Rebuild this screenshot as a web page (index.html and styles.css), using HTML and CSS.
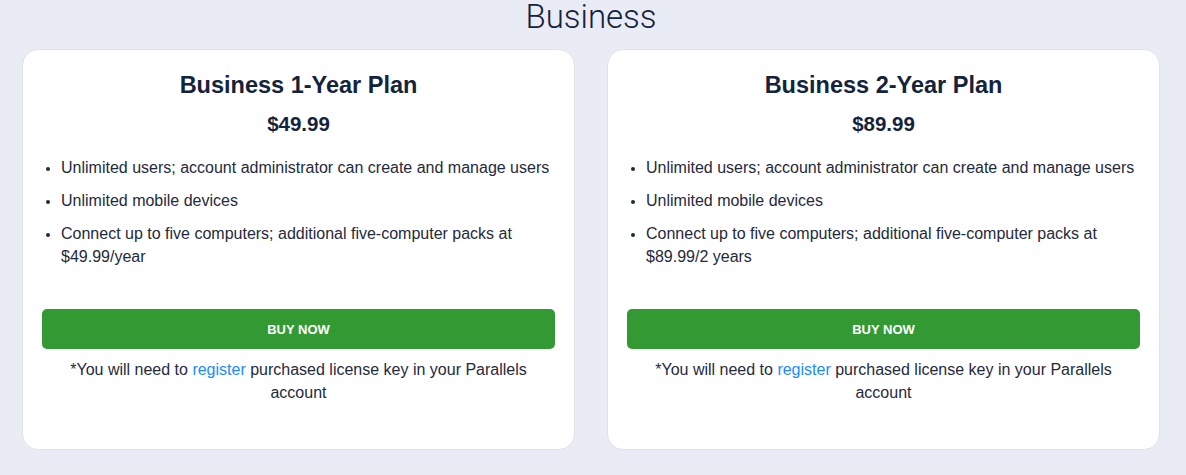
FILE: index.html
```html
<!DOCTYPE html>
<html lang="en">
<head>
<meta charset="utf-8">
<title>Business</title>
<link rel="stylesheet" href="styles.css">
</head>
<body>
<section class="section">
  <h2 class="section-title">Business</h2>
  <div class="plans">
    <div class="card">
      <h3 class="plan-name">Business 1-Year Plan</h3>
      <div class="price">$49.99</div>
      <ul class="features">
        <li>Unlimited users; account administrator can create and manage users</li>
        <li>Unlimited mobile devices</li>
        <li>Connect up to five computers; additional five-computer packs at $49.99/year</li>
      </ul>
      <a class="buy" href="#">BUY NOW</a>
      <p class="note">*You will need to <a href="#" class="link">register</a> purchased license key in your Parallels account</p>
    </div>
    <div class="card">
      <h3 class="plan-name">Business 2-Year Plan</h3>
      <div class="price">$89.99</div>
      <ul class="features">
        <li>Unlimited users; account administrator can create and manage users</li>
        <li>Unlimited mobile devices</li>
        <li>Connect up to five computers; additional five-computer packs at $89.99/2 years</li>
      </ul>
      <a class="buy" href="#">BUY NOW</a>
      <p class="note">*You will need to <a href="#" class="link">register</a> purchased license key in your Parallels account</p>
    </div>
  </div>
</section>
</body>
</html>
```
FILE: styles.css
```css
html, body {
  margin: 0;
  padding: 0;
  background: #e9ecf4;
  font-family: "Liberation Sans", Arial, sans-serif;
  color: #1f2a3c;
}
.section {
  padding: 0 26px 0 22px;
}
.section-title {
  margin: 0;
  text-align: center;
  font-family: Roboto, "Liberation Sans", sans-serif;
  font-weight: 300;
  font-size: 33px;
  line-height: 34px;
  height: 49px;
  color: #14233c;
}
.plans {
  display: grid;
  grid-template-columns: 1fr 1fr;
  gap: 32px;
}
.card {
  background: #fff;
  border: 1px solid #dfe2e8;
  border-radius: 16px;
  padding: 20px 19px 0;
  height: 401px;
  box-sizing: border-box;
  display: flex;
  flex-direction: column;
}
.plan-name {
  margin: 0;
  text-align: center;
  font-size: 23.5px;
  line-height: 30px;
  font-weight: 700;
  color: #14233c;
}
.price {
  text-align: center;
  font-size: 20.5px;
  font-weight: 700;
  line-height: 26px;
  margin-top: 11px;
  color: #14233c;
}
.features {
  margin: 19px 0 0;
  padding-left: 19px;
  font-size: 16px;
  line-height: 23px;
  color: #1f2a3c;
  height: 118px;
}
.features li {
  margin-bottom: 10px;
}
.features li::marker {
  font-size: 13px;
}
.buy {
  display: flex;
  align-items: center;
  justify-content: center;
  height: 40px;
  background: #339933;
  border-radius: 5px;
  color: #fff;
  text-decoration: none;
  font-size: 13px;
  font-weight: 700;
  margin-top: 35px;
}
.note {
  margin: 9px 0 0;
  text-align: center;
  font-size: 16px;
  line-height: 23px;
  color: #1f2a3c;
  padding: 0 10px;
}
.link {
  color: #1a8cff;
  text-decoration: none;
}
```
